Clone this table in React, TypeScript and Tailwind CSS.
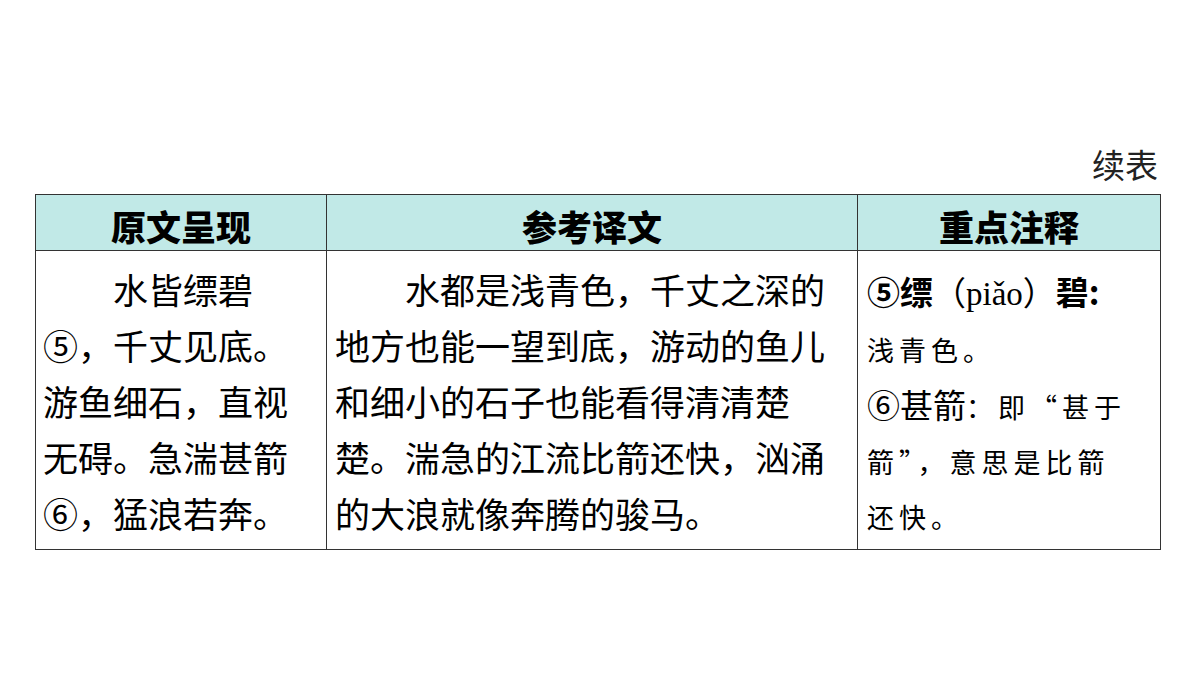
import React from 'react';

const sans = { fontFamily: '"Noto Sans CJK SC", "Noto Sans", sans-serif' };
const serif = { fontFamily: '"Liberation Serif", "Noto Sans CJK SC", serif' };

export default function App() {
  return (
    <div className="w-[1200px] h-[675px] bg-white text-black" style={sans}>
      <div className="pt-[140px] px-[35px]">
        <div className="text-right text-[33px] leading-[48px] text-[#222] pr-[7px]">续表</div>
        <table className="w-[1125px] border-collapse table-fixed mt-[6px]">
          <colgroup>
            <col className="w-[291px]" />
            <col className="w-[531px]" />
            <col className="w-[303px]" />
          </colgroup>
          <thead>
            <tr className="bg-[#c1e9e7] h-[56px]">
              <th className="border border-[#333] text-[35px] font-black leading-none align-middle pt-[5px]">原文呈现</th>
              <th className="border border-[#333] text-[35px] font-black leading-none align-middle pt-[5px]">参考译文</th>
              <th className="border border-[#333] text-[35px] font-black leading-none align-middle pt-[5px]">重点注释</th>
            </tr>
          </thead>
          <tbody>
            <tr className="h-[299px]">
              <td className="border border-[#333] align-top pl-[7px] pr-[20px] pt-[10px] text-[35px] leading-[56px]">
                <p className="indent-[70px]">水皆缥碧⑤，千丈见底。游鱼细石，直视无碍。急湍甚箭⑥，猛浪若奔。</p>
              </td>
              <td className="border border-[#333] align-top pl-[8px] pr-[20px] pt-[10px] text-[35px] leading-[56px]">
                <p className="indent-[70px]">水都是浅青色，千丈之深的地方也能一望到底，游动的鱼儿和细小的石子也能看得清清楚楚。湍急的江流比箭还快，汹涌的大浪就像奔腾的骏马。</p>
              </td>
              <td className="border border-[#333] align-top pl-[9px] pr-[4px] pt-[13px] leading-[55px]">
                <div className="text-[33px] font-bold whitespace-nowrap">
                  ⑤缥<span className="font-normal">（<span style={serif}>piǎo</span>）</span>碧:
                </div>
                <div className="text-[27px] tracking-[5px]">浅青色。</div>
                <div className="text-[27px] tracking-[5px] whitespace-nowrap">
                  <span className="text-[33px] tracking-normal">⑥甚箭</span>：即“甚于
                </div>
                <div className="text-[27px] tracking-[5px] whitespace-nowrap">箭”，意思是比箭</div>
                <div className="text-[27px] tracking-[5px]">还快。</div>
              </td>
            </tr>
          </tbody>
        </table>
      </div>
    </div>
  );
}
